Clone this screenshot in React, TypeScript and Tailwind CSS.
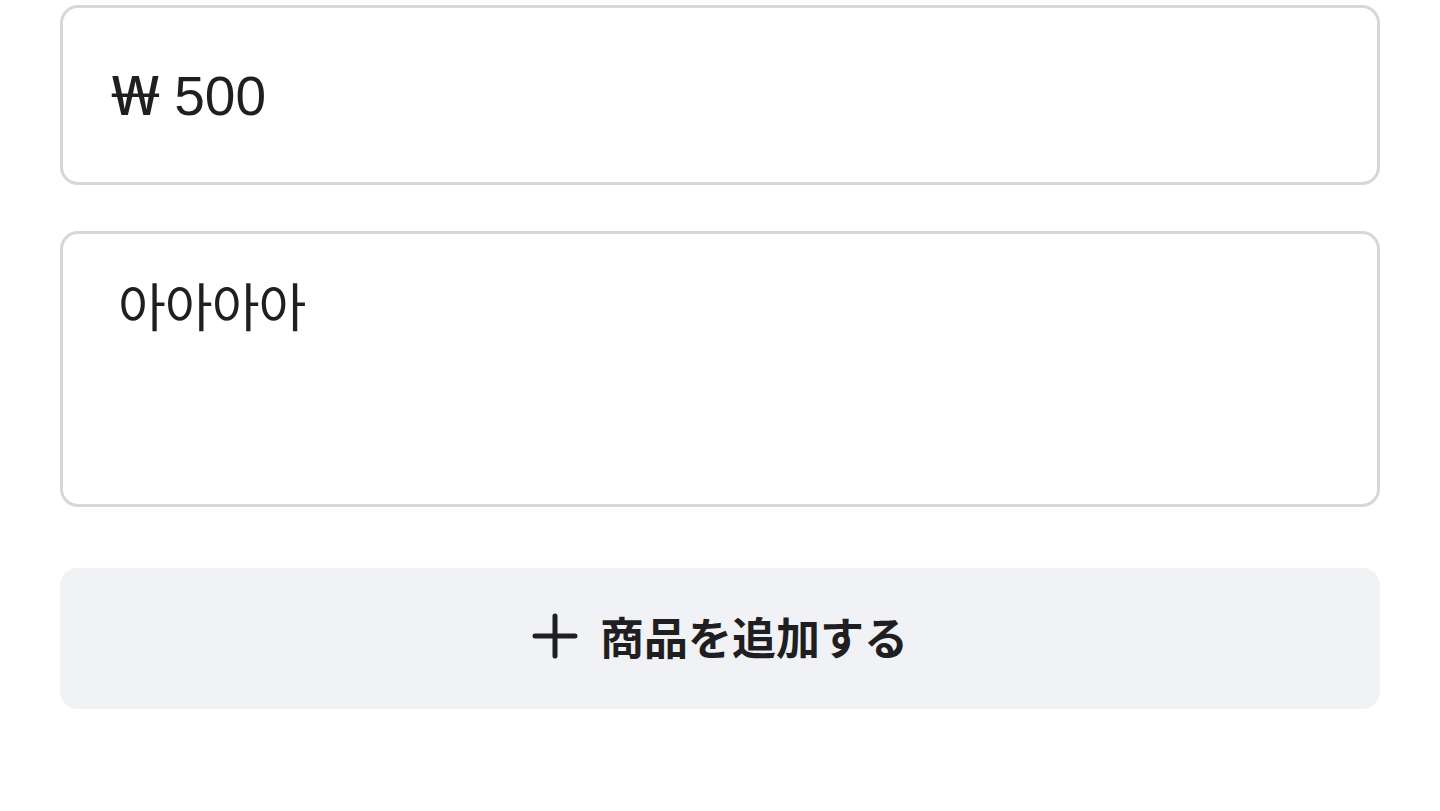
import React from 'react';

export default function App() {
  return (
    <div className="min-h-[811px] bg-white px-[60px] pt-[5px] font-['Liberation_Sans','Noto_Sans_CJK_JP',sans-serif] text-[#1f1f21]">
      <div className="flex h-[180px] items-center rounded-[18px] border-[3px] border-[#d6d6db] pl-[48px]">
        <span className="text-[55px] leading-none">
          <span className="inline-block w-[48px] origin-left scale-x-[1.35] font-['Noto_Sans',sans-serif] text-[54px]">₩</span> 500
        </span>
      </div>

      <div className="mt-[46px] h-[276px] rounded-[18px] border-[3px] border-[#d6d6db] pl-[55px] pt-[45px]">
        <span className="font-['Noto_Sans_CJK_KR',sans-serif] text-[52px] leading-none tracking-[-1px]">아아아아</span>
      </div>

      <button className="mt-[61px] flex h-[141px] w-full items-center justify-center gap-[22px] rounded-[18px] bg-[#f1f2f6] pb-[6px]">
        <svg width="46" height="46" viewBox="0 0 46 46" fill="none" stroke="#1f1f21" strokeWidth="5" strokeLinecap="round">
          <path d="M23 3v40M3 23h40" />
        </svg>
        <span className="font-['Noto_Sans_CJK_JP',sans-serif] text-[44px] font-bold leading-none">商品を追加する</span>
      </button>
    </div>
  );
}
